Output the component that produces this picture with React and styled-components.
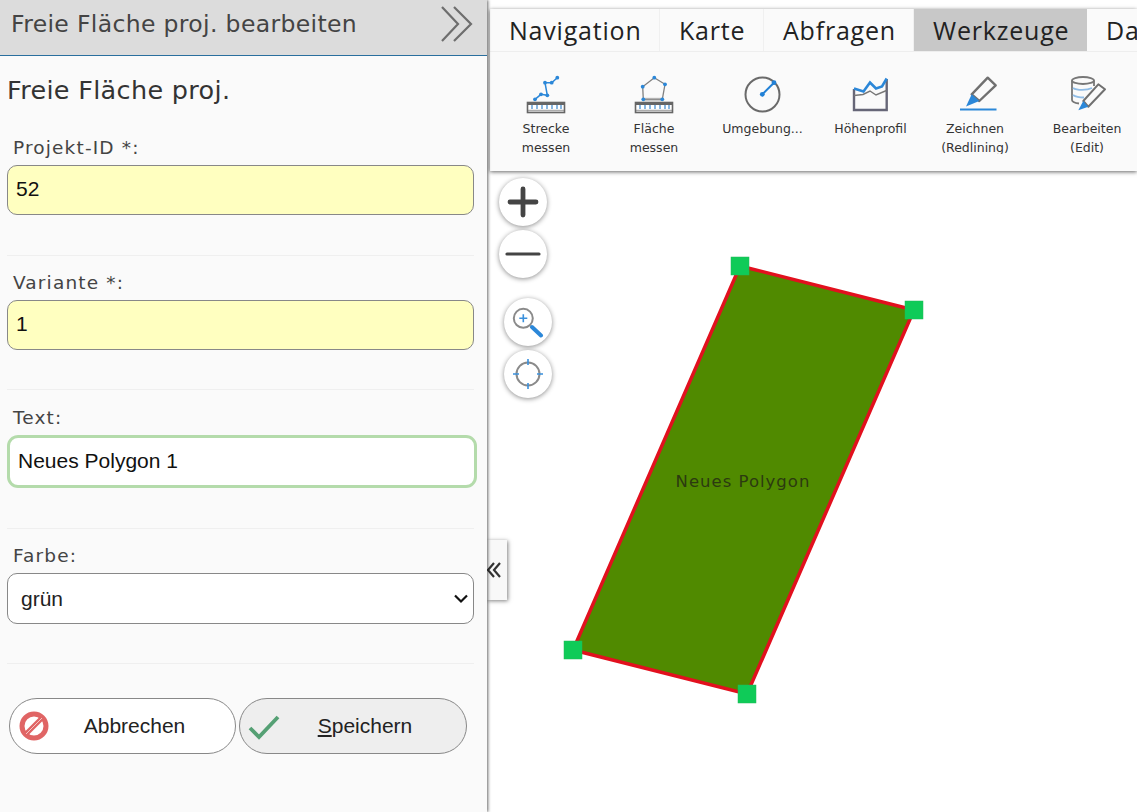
import React from "react";
import styled, { createGlobalStyle } from "styled-components";

const Global = createGlobalStyle`
  html, body { margin: 0; padding: 0; background: #fff; height: 100%; overflow: hidden; }
  #root { height: 812px; }
  * { box-sizing: border-box; }
`;
const Page = styled.div`
  display: flex; width: 1137px; height: 812px; overflow: hidden; background: #fff;
`;
const Side = styled.aside`
  position: relative; z-index: 3; flex: 0 0 487px; min-width: 0; height: 812px; background: #fafafa;
  box-shadow: 1px 0 3px rgba(0,0,0,.6);
  font-family: "DejaVu Sans", sans-serif; color: #333;
`;
const Head = styled.header`
  display: flex; align-items: center; justify-content: space-between; height: 56px;
  padding: 0 14px 7px 11px; background: #dcdcdc; border-bottom: 1px solid #2a6f9e;
  font-size: 23.5px; letter-spacing: .35px; color: #444;
`;
const Title = styled.h1`
  margin: 0; padding: 18px 0 0 7px; font-size: 25.5px; line-height: 33px; font-weight: 400; color: #333;
  letter-spacing: .32px;
`;
const Form = styled.div`
  padding: 28px 13px 0 7px;
`;
const Field = styled.div`
  padding: ${p => p.$pt}px 0 0;
  border-bottom: 1px solid #efefef;
  height: ${p => p.$h}px;
`;
const Label = styled.label`
  display: block; height: 30px; padding-left: 6px; line-height: 26px; font-size: 18.5px; letter-spacing: 1.15px; color: #444;
`;
const TextInput = styled.input`
  display: block; width: 100%; height: 50px; padding: 0 8px 2px; border: 1px solid #888; border-radius: 10px;
  background: #ffffc0; font: 21px "Liberation Sans", sans-serif; color: #111; outline: none;
`;
const FocusInput = styled(TextInput)`
  width: 470px; height: 53px; background: #fff; border: 3px solid #b4dbab; border-radius: 11px; padding: 0 8px 2px;
`;
const SelectWrap = styled.div`
  position: relative;
`;
const Select = styled.select`
  display: block; width: 100%; height: 51px; padding: 0 13px; border: 1px solid #888; border-radius: 10px;
  appearance: none; background: #fff; font: 21px "Liberation Sans", sans-serif; color: #222; outline: none;
`;
const Chevron = styled.svg`
  position: absolute; right: 6px; top: 21px; pointer-events: none;
`;
const Actions = styled.div`
  display: flex; gap: 3px; padding: 34px 0 0 2px;
`;
const Btn = styled.button`
  position: relative; display: flex; align-items: center; justify-content: center;
  width: ${p => p.$w}px; height: 56px; padding: 0 0 0 ${p => p.$pad}px; border: 1px solid #888; border-radius: 28px;
  background: ${p => p.$bg}; font: 21px "Liberation Sans", sans-serif; color: #222;
`;
const BtnIcon = styled.svg`
  position: absolute; left: 8px; top: 11px;
`;
const Map = styled.main`
  position: relative; flex: 1; min-width: 0; height: 812px; background: #fff;
`;
const Shape = styled.svg`
  position: absolute; left: 0; top: 0;
`;
const Ribbon = styled.nav`
  position: absolute; z-index: 2; left: 3px; right: 0; top: 9px; height: 162px; background: #fafafa;
  box-shadow: 0 1px 4px rgba(0,0,0,.6);
`;
const Tabs = styled.div`
  display: flex; height: 43px; border-bottom: 1px solid #eee; overflow: hidden;
`;
const Tab = styled.div`
  flex: 0 0 auto; width: ${p => p.$w}px; padding-left: 19px; height: 42px;
  font: 25px/42px "Open Sans", sans-serif; letter-spacing: .8px; color: #222; white-space: nowrap;
  background: ${p => p.$on ? "#c8c8c8" : "transparent"};
  border-right: 1px solid ${p => p.$on ? "#c8c8c8" : "#f0f0f0"};
`;
const Tools = styled.div`
  display: flex; padding: 22px 0 0 2px; overflow: hidden;
`;
const Tool = styled.div`
  flex: 0 0 auto; width: ${p => p.$w}px; display: flex; flex-direction: column; align-items: center;
  font: 12.500px/19px "DejaVu Sans", sans-serif; color: #333; text-align: center;
`;
const ToolIcon = styled.svg`
  display: block; margin-bottom: 5px; overflow: visible;
`;
const ToolText = styled.span`
  display: block; height: 35px; overflow: hidden; white-space: pre-line;
`;
const Controls = styled.div`
  position: absolute; z-index: 1; left: 12px; top: 178px; display: flex; flex-direction: column; gap: 4px;
`;
const Round = styled.div`
  display: flex; align-items: center; justify-content: center; width: 48px; height: 48px;
  margin: ${p => p.$mt || 0}px 0 0 ${p => p.$ml || 0}px; border-radius: 50%; background: #fff;
  box-shadow: 0 1px 5px rgba(0,0,0,.45);
`;
const Collapse = styled.div`
  position: absolute; z-index: 1; left: 0; top: 540px; width: 20px; height: 60px;
  display: flex; align-items: center; justify-content: flex-start;
  background: #f8f8f8; box-shadow: 1px 1px 4px rgba(0,0,0,.5);
`;

const Ruler = () => (
  <g>
    <rect x="1.500" y="28.500" width="37" height="10" fill="#fff" stroke="#666" strokeWidth="1.600" />
    <rect x="1" y="28" width="38" height="3" fill="#666" />
    <path d="M6 31v4M11 31v4M16 31v4M21 31v4M26 31v4M31 31v4M35 31v4" stroke="#4a90d0" strokeWidth="1.300" />
    <path d="M2 36.500h36" stroke="#777" strokeWidth="1.500" opacity=".6" />
  </g>
);
const Dots = ({ pts, r = 1.900 }) => pts.map(([x, y], i) => <circle key={i} cx={x} cy={y} r={r} fill="#2b87d8" />);

const poly1 = [[9, 25.300], [15, 20.300], [21.300, 21.300], [19, 8.700], [25.700, 8.700], [31.300, 3.700]];
const poly2 = [[9.300, 25.300], [8.700, 12.700], [20.300, 3.700], [31, 10.300], [28.300, 25.300]];
const toStr = a => a.map(p => p.join(",")).join(" ");

const tools = [
  { w: 108, t: "Strecke\nmessen", icon: <><polyline points={toStr(poly1)} fill="none" stroke="#2b87d8" strokeWidth="1.500" /><Dots pts={poly1} /><Ruler /></> },
  { w: 108, t: "Fläche\nmessen", icon: <><polygon points={toStr(poly2)} fill="none" stroke="#808080" strokeWidth="1.300" /><path d="M9.300 25.300h19" stroke="#999" strokeWidth="3" opacity=".6" /><Dots pts={poly2} /><Ruler /></> },
  { w: 109, t: "Umgebung...", icon: <><circle cx="19.500" cy="20.500" r="17" fill="none" stroke="#6a6a6a" strokeWidth="2" /><path d="M19.300 20.300L31 8.700" stroke="#2281d6" strokeWidth="2" /><circle cx="19.300" cy="20.300" r="2.400" fill="#2281d6" /><circle cx="31" cy="8.700" r="2.400" fill="#2281d6" /></> },
  { w: 107, t: "Höhenprofil", icon: <><path d="M3 15v21h32.700V5" fill="none" stroke="#667" strokeWidth="2.400" /><path d="M3 14.500l9.500 3 6.500-9 6 6 6-2 4.700-8" fill="none" stroke="#2b87d8" strokeWidth="2.600" /><path d="M3 21.500l9-1 7-3.500 6 4 10.500-4.500" fill="none" stroke="#777" strokeWidth="1.500" /></> },
  { w: 102, t: "Zeichnen\n(Redlining)", icon: <><path d="M5 35.500h36.500" stroke="#2b87d8" strokeWidth="2.200" /><path d="M16.700 20.300L32.700 3.700 40.700 11.300 24.300 27z" fill="none" stroke="#707070" strokeWidth="2.400" strokeLinejoin="round" /><path d="M16.700 20.300L24.300 27 11 32.500z" fill="#2b87d8" /></> },
  { w: 122, t: "Bearbeiten\n(Edit)", icon: <><ellipse cx="16" cy="6.500" rx="11" ry="3.500" fill="none" stroke="#777" strokeWidth="1.800" /><path d="M5 6.500V26c0 2 3 3 7 3.500M27 6.500V12" fill="none" stroke="#777" strokeWidth="1.800" /><path d="M6 14c4 2.500 14 2.500 19 0M6 21c3 2 7 2.500 11 2.500" fill="none" stroke="#8fbce6" strokeWidth="1.800" /><path d="M16.300 27L31.300 10.300 38 15.300 21.300 32.700z" fill="#fafafa" stroke="#707070" strokeWidth="2" strokeLinejoin="round" /><path d="M16.300 27L21.300 32.700 11.300 36.300z" fill="#2b87d8" /></> },
];

export default function App() {
  return (
    <Page>
      <Global />
      <Side>
        <Head>
          <span>Freie Fläche proj. bearbeiten</span>
          <svg width="32" height="36" viewBox="0 0 32 36" fill="none" stroke="#6e6e6e" strokeWidth="2.200">
            <path d="M1 1l16 17L1 35M13 1l17 17-17 17" />
          </svg>
        </Head>
        <Title>Freie Fläche proj.</Title>
        <Form>
          <Field $pt={0} $h={121}>
            <Label>Projekt-ID *:</Label>
            <TextInput readOnly value="52" />
          </Field>
          <Field $pt={14} $h={134}>
            <Label>Variante *:</Label>
            <TextInput readOnly value="1" />
          </Field>
          <Field $pt={15} $h={139}>
            <Label>Text:</Label>
            <FocusInput readOnly value="Neues Polygon 1" />
          </Field>
          <Field $pt={14} $h={135}>
            <Label>Farbe:</Label>
            <SelectWrap>
              <Select defaultValue="grün"><option>grün</option></Select>
              <Chevron width="14" height="10" viewBox="0 0 14 10" fill="none" stroke="#111" strokeWidth="2.200">
                <path d="M1 1.500l6 6 6-6" />
              </Chevron>
            </SelectWrap>
          </Field>
          <Actions>
            <Btn $w={227} $bg="#fff" $pad={24}>
              <BtnIcon width="32" height="32" viewBox="0 0 32 32">
                <circle cx="16" cy="16" r="12" fill="none" stroke="#e06565" strokeWidth="5" />
                <path d="M8 24L24 8" stroke="#e06565" strokeWidth="5" />
                <path d="M8 24L24 8" stroke="#f5c5c5" strokeWidth="1" />
              </BtnIcon>
              Abbrechen
            </Btn>
            <Btn $w={228} $bg="#eeeeee" $pad={24}>
              <BtnIcon width="32" height="32" viewBox="0 0 32 32">
                <path d="M2 18l9 9L30 7" fill="none" stroke="#55a074" strokeWidth="3.800" />
              </BtnIcon>
              <span><u>S</u>peichern</span>
            </Btn>
          </Actions>
        </Form>
      </Side>
      <Map>
        <Shape width="650" height="812" viewBox="487 0 650 812">
          <polygon points="740,266 914,310 747,694 573,650" fill="#508a00" stroke="#e2101e" strokeWidth="3.500" />
          <text x="743" y="487" textAnchor="middle" fontFamily="DejaVu Sans, sans-serif" fontSize="16.500" letterSpacing="1" fill="#2c3a10">Neues Polygon</text>
          {[[740, 266], [914, 310], [747, 694], [573, 650]].map(([x, y]) => (
            <rect key={x} x={x - 9} y={y - 9} width="18" height="18" fill="#0fcb58" stroke="#22b95a" strokeWidth=".5" />
          ))}
        </Shape>
        <Ribbon>
          <Tabs>
            <Tab $w={170}>Navigation</Tab>
            <Tab $w={104}>Karte</Tab>
            <Tab $w={150}>Abfragen</Tab>
            <Tab $w={173} $on>Werkzeuge</Tab>
            <Tab $w={80}>Daten</Tab>
          </Tabs>
          <Tools>
            {tools.map(t => (
              <Tool key={t.t} $w={t.w}>
                <ToolIcon width="40" height="40" viewBox="0 0 40 40">{t.icon}</ToolIcon>
                <ToolText>{t.t}</ToolText>
              </Tool>
            ))}
          </Tools>
        </Ribbon>
        <Controls>
          <Round>
            <svg width="32" height="32" viewBox="0 0 32 32"><path d="M16 3v26M3 16h26" stroke="#444" strokeWidth="4.800" strokeLinecap="round" /></svg>
          </Round>
          <Round>
            <svg width="36" height="8" viewBox="0 0 36 8"><path d="M2 4h32" stroke="#444" strokeWidth="3.200" strokeLinecap="round" /></svg>
          </Round>
          <Round $mt={16} $ml={5}>
            <svg width="32" height="32" viewBox="0 0 32 32">
              <circle cx="11.300" cy="12.300" r="9.500" fill="none" stroke="#8a8a8a" strokeWidth="2" />
              <path d="M11.300 8.300v8M7.300 12.300h8" stroke="#3a90dc" strokeWidth="1.600" />
              <path d="M20 21L29 29.500" stroke="#2b87d8" strokeWidth="4" strokeLinecap="round" />
            </svg>
          </Round>
          <Round $ml={5}>
            <svg width="32" height="32" viewBox="0 0 32 32">
              <circle cx="16" cy="16" r="11.500" fill="none" stroke="#8a8a8a" strokeWidth="2" />
              <path d="M16 1v6M16 25v6M1 16h6M25 16h6" stroke="#3a90dc" strokeWidth="1.600" />
            </svg>
          </Round>
        </Controls>
        <Collapse>
          <svg width="14" height="16" viewBox="0 0 14 16" fill="none" stroke="#333" strokeWidth="2.200">
            <path d="M7 1L1 8l6 7M13 1L7 8l6 7" />
          </svg>
        </Collapse>
      </Map>
    </Page>
  );
}
